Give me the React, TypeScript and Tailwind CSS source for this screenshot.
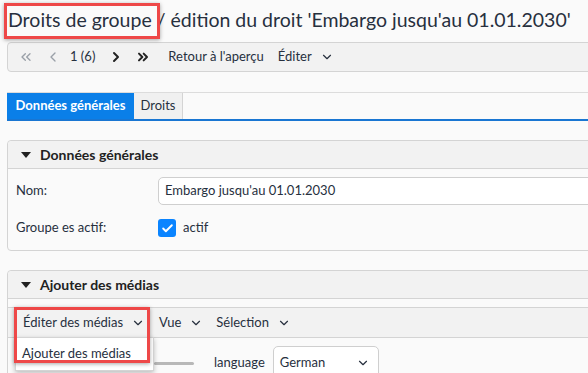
import { ChevronsLeft, ChevronLeft, ChevronRight, ChevronsRight, ChevronDown, Check } from "lucide-react";

function Caret() {
  return (
    <svg width="10" height="6" viewBox="0 0 10 6" className="shrink-0">
      <path d="M0 0 L10 0 L5 6 Z" fill="#222" />
    </svg>
  );
}

function Panel({ title, children }: { title: string; children: React.ReactNode }) {
  return (
    <div className="ml-[7px] -mr-4 rounded-[4px] border border-[#d4d4d4] bg-[#fafafa]">
      <div className="flex h-[28px] items-center gap-[9px] border-b border-[#d4d4d4] bg-[#f2f2f2] pl-[13px] rounded-t-[4px]">
        <Caret />
        <span className="text-[14px] font-bold text-[#222]">{title}</span>
      </div>
      {children}
    </div>
  );
}

export default function App() {
  return (
    <div className="h-[373px] w-[588px] overflow-hidden bg-[#fafafa] text-[#27303e]" style={{ fontFamily: "Lato, 'Noto Sans', sans-serif" }}>
      {/* Title */}
      <div className="pl-[8px] pt-[7px] text-[19.5px] leading-[26px] whitespace-nowrap">
        <span className="relative">
          Droits de groupe
          <span className="absolute -left-[4px] -right-[8px] -top-[5px] -bottom-[8px] border-[3px] border-[#ee4848] shadow-[0_1px_4px_rgba(0,0,0,0.35)]" />
        </span>{" "}
        / édition du droit 'Embargo jusqu'au 01.01.2030'
      </div>

      {/* Record toolbar */}
      <div className="ml-[7px] -mr-4 mt-[9px] flex h-[30px] items-center rounded-l-[4px] border border-[#d4d4d4] bg-[#f2f2f2] pl-[10px] text-[13px] whitespace-nowrap">
        <ChevronsLeft size={16} strokeWidth={2} className="text-[#9aa0a8]" />
        <ChevronLeft size={16} strokeWidth={2} className="ml-[11px] text-[#9aa0a8]" />
        <span className="ml-[9px]">1 (6)</span>
        <ChevronRight size={16} strokeWidth={3} className="ml-[13px] text-[#222]" />
        <ChevronsRight size={16} strokeWidth={3} className="ml-[11px] text-[#222]" />
        <span className="ml-[17px]">Retour à l'aperçu</span>
        <span className="ml-[14px]">Éditer</span>
        <ChevronDown size={14} strokeWidth={2} className="ml-[8px]" />
      </div>

      {/* Tabs */}
      <div className="ml-[7px] -mr-4 mt-[20px] flex h-[29px] border-t border-[#dcdcdc] border-b-2 border-b-[#1976d2] bg-[#fafafa] text-[13px]">
        <div className="flex w-[127px] items-center justify-center bg-[#0a7fe8] font-bold text-white">Données générales</div>
        <div className="flex w-[49px] items-center justify-center border-r border-[#d4d4d4] bg-[#f0f0f0]">Droits</div>
      </div>

      {/* Données générales */}
      <div className="mt-[19px]">
        <Panel title="Données générales">
          <div className="flex flex-col gap-[14px] pb-[13px] pt-[8px] text-[13px]">
            <div className="flex items-center">
              <span className="w-[150px] pl-[8px]">Nom:</span>
              <div className="flex h-[28px] flex-1 items-center rounded-[5px] border border-[#cfcfcf] bg-white pl-[6px]">
                Embargo jusqu'au 01.01.2030
              </div>
            </div>
            <div className="flex h-[18px] items-center">
              <span className="w-[150px] pl-[8px]">Groupe es actif:</span>
              <span className="flex h-[18px] w-[18px] items-center justify-center rounded-[3px] bg-[#0a84ff]">
                <Check size={13} strokeWidth={3.5} className="text-white" />
              </span>
              <span className="ml-[7px]">actif</span>
            </div>
          </div>
        </Panel>
      </div>

      {/* Ajouter des médias */}
      <div className="mt-[19px]">
        <Panel title="Ajouter des médias">
          <div className="pt-[8px]">
            <div className="relative flex h-[31px] items-center border-y border-[#d4d4d4] bg-[#f2f2f2] pl-[15px] text-[13px] whitespace-nowrap">
              <span>Éditer des médias</span>
              <ChevronDown size={14} strokeWidth={2} className="ml-[8px]" />
              <span className="ml-[14px]">Vue</span>
              <ChevronDown size={14} strokeWidth={2} className="ml-[8px]" />
              <span className="ml-[13px]">Sélection</span>
              <ChevronDown size={14} strokeWidth={2} className="ml-[8px]" />

              {/* Open dropdown */}
              <div className="absolute left-[7px] top-[29px] z-10 w-[139px] border border-[#d4d4d4] bg-white py-[6px] pl-[6px] shadow-[0_2px_5px_rgba(0,0,0,0.25)]">
                Ajouter des médias
              </div>
              {/* Highlight */}
              <div className="absolute left-[6px] -top-[1px] z-20 h-[56px] w-[136px] border-[3px] border-[#ee4848] shadow-[0_1px_4px_rgba(0,0,0,0.35)]" />
            </div>
            <div className="flex items-center pl-[146px] pt-[8px] text-[13px]">
              <div className="h-[3px] w-[40px] rounded bg-[#b8b8b8]" />
              <span className="ml-[20px]">language</span>
              <div className="ml-[8px] flex h-[34px] w-[106px] items-center justify-between rounded-[5px] border border-[#cfcfcf] bg-white pl-[6px] pr-[8px]">
                <span>German</span>
                <ChevronDown size={14} strokeWidth={2} />
              </div>
            </div>
          </div>
        </Panel>
      </div>
    </div>
  );
}
